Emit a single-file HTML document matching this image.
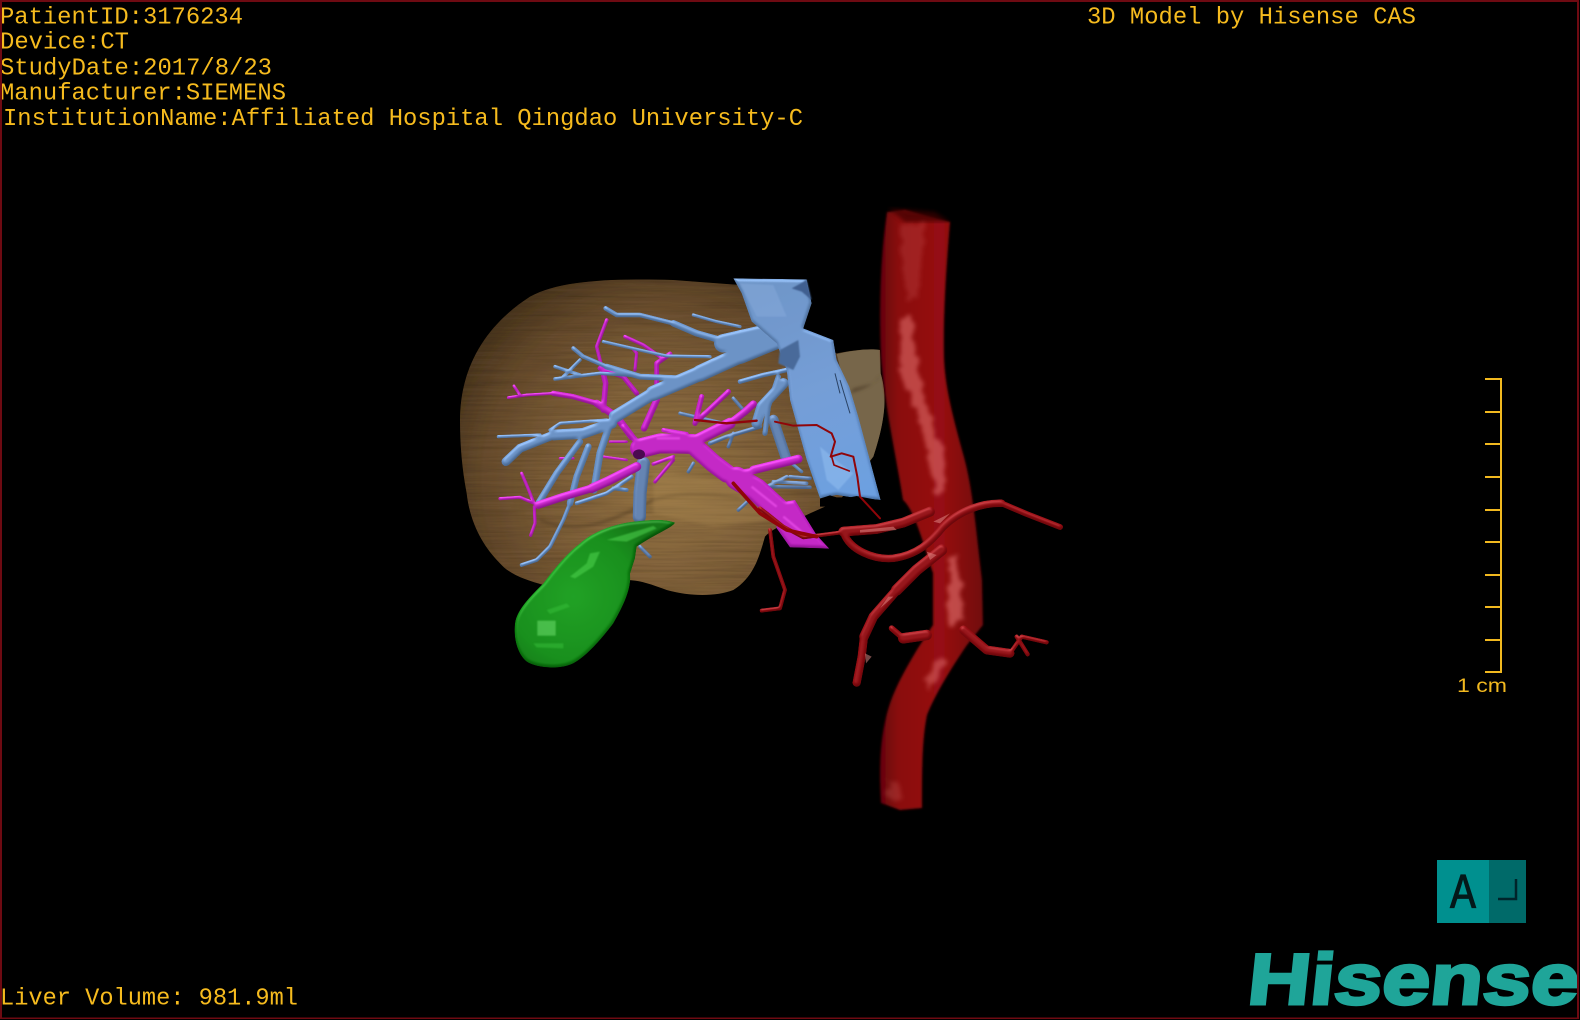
<!DOCTYPE html>
<html lang="en"><head><meta charset="utf-8"><title>3D Model</title>
<style>html,body{margin:0;padding:0;background:#000;width:1580px;height:1020px;overflow:hidden}svg{display:block}
.t{font-family:"Liberation Mono",monospace;font-size:24px;fill:#f6bb1e}
.v{fill:none;stroke-linecap:round;stroke-linejoin:round}</style></head><body>
<svg width="1580" height="1020" viewBox="0 0 1580 1020" xmlns="http://www.w3.org/2000/svg">
<defs>
<radialGradient id="lg" gradientUnits="userSpaceOnUse" cx="680" cy="660" r="690"><stop offset="0" stop-color="#967545"/><stop offset=".45" stop-color="#80613a"/><stop offset=".8" stop-color="#664b2d"/><stop offset="1" stop-color="#4a3620"/></radialGradient>
<linearGradient id="ivc" gradientUnits="userSpaceOnUse" x1="1000" y1="60" x2="1260" y2="720"><stop offset="0" stop-color="#6f9bd4"/><stop offset=".5" stop-color="#76a4e4"/><stop offset="1" stop-color="#6ca6f0"/></linearGradient>
<linearGradient id="ao" x1="0" y1="0" x2="1" y2="0"><stop offset="0" stop-color="#640509"/><stop offset=".18" stop-color="#8a0a10"/><stop offset=".6" stop-color="#960c12"/><stop offset="1" stop-color="#72070b"/></linearGradient>
<radialGradient id="gb" gradientUnits="userSpaceOnUse" cx="220" cy="290" r="270"><stop offset="0" stop-color="#16a81b"/><stop offset=".7" stop-color="#0e9412"/><stop offset="1" stop-color="#0a7a0d"/></radialGradient>
<filter id="tex" x="0" y="0" width="100%" height="100%"><feTurbulence type="fractalNoise" baseFrequency="0.004 0.14" numOctaves="3" seed="4"/><feColorMatrix values="0 0 0 0 0 0 0 0 0 0 0 0 0 0 0 .5 0 0 0 -.18" result="n"/><feComposite in="n" in2="SourceAlpha" operator="in" result="n2"/><feMerge><feMergeNode in="SourceGraphic"/><feMergeNode in="n2"/></feMerge></filter>
<filter id="tube" x="-5%" y="-5%" width="110%" height="110%" color-interpolation-filters="sRGB">
<feGaussianBlur in="SourceAlpha" stdDeviation="5" result="b"/>
<feDiffuseLighting in="b" surfaceScale="3" diffuseConstant="1" lighting-color="#fff" result="d"><feDistantLight azimuth="250" elevation="55"/></feDiffuseLighting>
<feComposite in="SourceGraphic" in2="d" operator="arithmetic" k1=".65" k2=".35" k3="0" k4="0" result="m"/>
<feSpecularLighting in="b" surfaceScale="3" specularConstant=".2" specularExponent="40" lighting-color="#fff" result="s"><feDistantLight azimuth="250" elevation="60"/></feSpecularLighting>
<feComposite in="m" in2="s" operator="arithmetic" k1="0" k2="1" k3="1" k4="0" result="r"/>
<feComposite in="r" in2="SourceAlpha" operator="in"/>
</filter>
<filter id="b2"><feGaussianBlur stdDeviation="2"/></filter>
<filter id="b5"><feGaussianBlur stdDeviation="5"/></filter>
<filter id="b1"><feGaussianBlur stdDeviation="1"/></filter>
<filter id="rough" x="-30%" y="-30%" width="160%" height="160%"><feTurbulence type="fractalNoise" baseFrequency="0.09" numOctaves="2" seed="7" result="t"/><feDisplacementMap in="SourceGraphic" in2="t" scale="12" xChannelSelector="R" yChannelSelector="G"/><feGaussianBlur stdDeviation="2"/></filter>
</defs>
<rect width="1580" height="1020" fill="#000"/>

<!-- zoom-2 coordinate space -->
<g transform="translate(440 260) scale(.33333)">
<path filter="url(#tex)" fill="url(#lg)" d="M60,480 C60,330 130,200 270,110 C360,60 520,55 700,60 L900,75 L1000,200 L1190,280 C1240,270 1290,265 1320,270 L1322,340 C1340,400 1340,470 1300,590 L1200,720 L1110,760 C1060,785 1000,800 975,830 C960,880 945,950 880,990 C830,1010 750,1010 680,990 C640,975 600,960 560,960 L310,975 C260,960 210,945 180,910 C130,860 90,790 80,700 C65,620 60,550 60,480Z"/>
<path fill="#77664a" d="M1190,282 C1240,270 1290,265 1320,270 L1322,340 C1340,400 1340,470 1300,590 L1260,640 L1220,400Z"/>
<path fill="#5a4a33" filter="url(#b5)" d="M1230,400 C1270,390 1310,370 1322,345 L1300,370 L1240,385Z"/>
<path fill="none" stroke="#4f3a22" stroke-width="8" opacity=".6" filter="url(#b5)" d="M300,780 C420,830 520,780 640,720 C720,695 820,700 900,715"/>
<path fill="#a98650" opacity=".4" filter="url(#b5)" d="M640,640 L860,660 L1000,780 L820,800 L640,760Z"/>

<!-- rear portal / deep branches -->
<g filter="url(#tube)"><g class="v" stroke="#6488bc">
<path stroke-width="40" d="M610,610 L600,700 L598,770"/>
<path stroke-width="32" d="M1000,480 L1040,600"/>
<path stroke-width="11" d="M1050,650 L1110,655 M990,680 L1110,682 M1000,665 L1100,670"/>
<path stroke-width="11" d="M1040,650 L960,690 L895,750"/>
<path stroke-width="13" d="M960,500 L860,530 L810,550"/>
<path stroke-width="11" d="M720,460 L850,490 M880,415 L910,450 M880,520 L865,560 M760,610 L745,635"/>
<path stroke-width="11" d="M600,860 L630,890"/>
</g></g>

<!-- magenta upper branches -->
<g filter="url(#tube)"><g class="v" stroke="#cf20d2">
<path stroke-width="22" d="M575,530 L530,470 L470,430"/>
<path stroke-width="16" d="M470,430 L400,410 L340,400"/>
<path stroke-width="9" d="M340,400 L260,405 L205,413 M240,405 L222,378"/>
<path stroke-width="17" d="M490,450 L497,370 L485,320"/>
<path stroke-width="11" d="M485,320 L470,260 L500,180"/>
<path stroke-width="15" d="M590,400 L550,350 L480,325"/>
<path stroke-width="15" d="M650,380 L650,310 L690,282"/>
<path stroke-width="11" d="M660,290 L610,255 L555,230"/>
<path stroke-width="10" d="M585,330 L590,280 L578,265"/>
<path stroke-width="20" d="M612,505 L650,420"/>
<path stroke-width="8" d="M490,590 L560,600 M360,595 L400,595 M510,545 L560,545"/>
</g></g>

<!-- hepatic veins -->
<g filter="url(#tube)"><g class="v" stroke="#6c98d2">
<path stroke-width="54" d="M1010,240 L900,285"/>
<path stroke-width="50" d="M900,285 L780,340"/>
<path stroke-width="46" d="M780,340 L640,400"/>
<path stroke-width="38" d="M640,400 L525,470"/>
<path stroke-width="40" d="M1060,170 L1040,240 L1045,300"/>
<path stroke-width="56" d="M960,225 L850,250"/>
<path stroke-width="33" d="M515,490 L430,520 L340,525"/>
<path stroke-width="27" d="M340,525 L240,565 L198,605"/>
<path stroke-width="20" d="M840,240 L770,220 L700,190"/>
<path stroke-width="14" d="M700,190 L600,165 L530,165 L497,145"/>
<path stroke-width="10" d="M760,165 L830,185 L900,200"/>
<path stroke-width="10" d="M490,245 L620,275 L680,288 L810,290"/>
<path stroke-width="18" d="M720,355 L600,350 L500,320"/>
<path stroke-width="13" d="M500,320 L430,290 L400,265"/>
<path stroke-width="11" d="M640,350 L480,340 L345,357 M345,320 L420,345 M420,300 L370,350"/>
<path stroke-width="10" d="M500,480 L360,490 L330,510 M300,525 L175,530"/>
<path stroke-width="22" d="M510,490 L480,580 L462,690"/>
<path stroke-width="20" d="M420,545 L350,640 L295,730"/>
<path stroke-width="20" d="M445,560 L410,650 L390,730"/>
<path stroke-width="12" d="M390,730 L370,780 L330,860 L290,900 L245,915"/>
<path stroke-width="12" d="M575,650 L500,700 L410,730 M520,685 L560,690"/>
<path stroke-width="14" d="M1050,328 L970,345 L900,365"/>
<path stroke-width="16" d="M1015,350 L985,440 L975,520"/>
<path stroke-width="32" d="M1030,370 L965,440 L950,490"/>
<path stroke-width="10" d="M1055,610 L1085,635"/>
</g></g>

<!-- magenta main -->
<g filter="url(#tube)"><g class="v" stroke="#cf20d2">
<path stroke-width="28" d="M590,620 L500,665 L455,685"/>
<path stroke-width="24" d="M455,685 L370,710 L295,735"/>
<path stroke-width="10" d="M295,735 L240,712 L180,716 M283,740 L285,790 L272,826 M280,725 L262,680 L245,640"/>
<path stroke-width="11" d="M700,590 L640,612 M700,600 L645,665"/>
<path stroke-width="18" d="M550,500 L590,545"/>
<path stroke-width="13" d="M670,510 L740,522"/>
<path stroke-width="16" d="M765,490 L785,410 M775,480 L865,395"/>
<path stroke-width="34" d="M770,540 L870,490"/>
<path stroke-width="22" d="M870,490 L915,455 L940,432"/>
<path stroke-width="14" d="M870,640 L940,630"/>
<path stroke-width="26" d="M940,630 L1075,597"/>
<path stroke-width="60" d="M600,565 L660,550 L760,552"/>
<path stroke-width="56" d="M770,565 L820,610 L860,640"/>
<path stroke-width="70" d="M890,655 L950,690 L1020,755"/>
<path fill="#cf20d2" stroke="none" d="M1000,730 L1065,720 L1130,825 L1168,866 L1050,862 L1010,805Z"/>
</g></g>
<ellipse cx="597" cy="583" rx="18" ry="15" fill="#4a0a50"/>
<path stroke="#f456f4" stroke-width="7" fill="none" opacity=".6" filter="url(#b2)" d="M935,680 L1010,740 M1030,770 L1090,820 M650,535 L720,535"/>

<!-- IVC -->
<path filter="url(#tube)" fill="url(#ivc)" d="M880,55 L1100,58 L1115,130 L1090,205 L1180,240 L1190,300 L1228,380 L1255,470 L1322,720 L1235,712 L1190,705 L1140,715 L1100,600 L1050,420 L1040,330 L1010,250 L935,185 L905,100Z"/>
<path fill="#3f5f90" filter="url(#b2)" d="M1055,85 L1100,60 L1115,120 L1085,95Z"/>
<path fill="#4a6a9a" filter="url(#b2)" d="M1020,270 L1075,240 L1080,290 L1060,330 L1015,310Z"/>
<path fill="#8fbcef" opacity=".6" filter="url(#b2)" d="M1140,560 L1200,610 L1240,640 L1195,690 L1160,660Z"/>
<path fill="#8dafdf" opacity=".4" filter="url(#b2)" d="M900,70 L1000,75 L1040,170 L950,170Z"/>
<path stroke="#2a4264" stroke-width="3" fill="none" d="M1185,340 L1200,400 M1200,360 L1230,460"/>
<path fill="#000" d="M1140,716 L1170,706 L1190,712 L1230,712 L1250,708 L1322,722 L1322,740 L1140,740Z"/>
</g>

<!-- gallbladder (zoom-7 space) -->
<g transform="translate(500 500) scale(.33333)">
<path filter="url(#tube)" fill="url(#gb)" d="M525,68 C520,82 470,100 410,140 L405,175 L390,222 C395,260 375,310 340,370 C310,410 260,470 220,490 C180,510 110,505 80,485 C50,460 40,410 45,370 C50,330 90,290 130,250 C160,210 200,160 240,130 C280,95 340,72 400,65 C450,60 490,55 525,68Z"/>
<path fill="#4fd44f" opacity=".55" filter="url(#b2)" d="M320,120 L370,105 L460,78 L470,85 L380,125Z M210,230 L260,190 L270,160 L300,155 L280,200 L225,235Z"/>
<rect x="112" y="362" width="55" height="45" fill="#66d866" opacity=".6" filter="url(#b2)"/>
<path fill="#38c03a" opacity=".5" filter="url(#b2)" d="M100,430 L190,430 L190,445 L110,442Z M140,330 L200,310 L210,320 L150,342Z"/>
</g>

<!-- aorta -->
<path filter="url(#b1)" fill="url(#ao)" d="M887,212 L905,210 L950,222 C947,260 943,310 944,357 C945,385 951,410 964,457 C973,490 976,530 982,580 L983,625 L967,645 C950,670 935,695 927,715 C922,740 922,770 922,808 L900,810 L881,803 C879,770 880,745 885,722 C890,695 905,670 918,648 L933,625 L933,573 C925,550 915,510 903,500 C897,460 885,410 881,357 C879,310 880,260 887,212Z"/>
<path fill="#3d0306" opacity=".7" filter="url(#b2)" d="M888,208 L935,212 L950,222 L905,222Z"/>
<g fill="#dd6a68" filter="url(#rough)">
<path opacity=".6" d="M900,320 L912,318 L918,370 L925,400 L945,460 L945,490 L935,495 L928,450 L912,400 L900,370Z"/>
<path opacity=".22" d="M900,225 L925,222 L918,300 L905,300Z"/>
<path opacity=".65" d="M948,558 L958,555 L963,620 L950,625Z"/>
<path opacity=".55" d="M925,680 L940,655 L945,665 L932,688Z"/>
<path opacity=".25" d="M888,780 L900,780 L902,800 L890,800Z"/>
</g>

<!-- red branches (zoom-3 space) -->
<g transform="translate(760 480) scale(.33333)">
<g filter="url(#tube)"><g class="v" stroke="#9c0b11">
<path stroke-width="30" d="M250,155 L350,147 L430,128 L510,95"/>
<path stroke-width="12" d="M240,158 L130,172 L70,140 L20,100 L0,85"/>
<path stroke-width="23" d="M252,160 C270,210 340,240 400,235 C470,225 510,190 550,140 C600,90 670,68 725,70"/>
<path stroke-width="18" d="M725,70 L800,102 L900,141"/>
<path stroke-width="34" d="M545,210 L470,270 L410,330"/>
<path stroke-width="29" d="M410,330 L340,410 L312,470"/>
<path stroke-width="25" d="M312,470 L305,530 L290,608"/>
<path stroke-width="12" d="M30,150 L40,230 L75,330 L60,385 L5,392"/>
<path stroke-width="27" d="M610,450 L680,510 L750,520"/>
<path stroke-width="13" d="M750,520 L785,470 L860,487 M770,470 L803,523"/>
<path stroke-width="32" d="M500,465 L430,475"/>
<path stroke-width="18" d="M430,475 L395,445"/>
</g></g>
<g fill="#e5908c" filter="url(#b1)" opacity=".5"><path d="M520,125 L570,100 L540,130Z M500,215 L530,225 L510,240Z M385,350 L400,350 L360,385Z M315,520 L335,530 L318,550Z M300,150 L400,140 L410,150 L300,158Z"/></g>
</g>

<!-- thin artery wires (zoom-2 space) -->
<g transform="translate(440 260) scale(.33333)">
<g class="v" stroke="#900509">
<path stroke-width="7" d="M765,480 L860,490 L950,482"/>
<path stroke-width="6" d="M1005,485 L1060,497 L1130,495 L1175,520 L1185,545 L1172,590 L1205,580 L1240,590 L1252,650 L1260,710 L1320,775"/>
<path stroke-width="5" d="M1175,590 L1182,615 L1228,633"/>
<path stroke-width="11" d="M880,670 L960,760 L1040,810 L1130,830"/>
</g></g>

<!-- text -->
<text class="t" x="0" y="23.5" textLength="243" lengthAdjust="spacingAndGlyphs">PatientID:3176234</text>
<text class="t" x="0" y="48.5" textLength="129" lengthAdjust="spacingAndGlyphs">Device:CT</text>
<text class="t" x="0" y="74.5" textLength="272" lengthAdjust="spacingAndGlyphs">StudyDate:2017/8/23</text>
<text class="t" x="0" y="99.5" textLength="286" lengthAdjust="spacingAndGlyphs">Manufacturer:SIEMENS</text>
<text class="t" x="3" y="125" textLength="800" lengthAdjust="spacingAndGlyphs">InstitutionName:Affiliated Hospital Qingdao University-C</text>
<text class="t" x="1087" y="23.5" textLength="329" lengthAdjust="spacingAndGlyphs">3D Model by Hisense CAS</text>
<text class="t" x="0" y="1004.5" textLength="298" lengthAdjust="spacingAndGlyphs">Liver Volume: 981.9ml</text>

<!-- scale bar -->
<path fill="none" stroke="#f2b91f" stroke-width="2" d="M1485,379H1501V672H1485M1485,412H1501M1485,444H1501M1485,477H1501M1485,510H1501M1485,542H1501M1485,575H1501M1485,607H1501M1485,640H1501"/>
<text x="1457" y="692" textLength="50" lengthAdjust="spacingAndGlyphs" style="font-family:'Liberation Sans',sans-serif;font-size:19px" fill="#f2b91f">1 cm</text>

<!-- orientation cube -->
<rect x="1437" y="860" width="52" height="63" fill="#00908f"/>
<rect x="1489" y="860" width="37" height="63" fill="#006a69"/>
<text x="1450" y="908" textLength="26" lengthAdjust="spacingAndGlyphs" style="font-family:'Liberation Mono',monospace;font-size:50px" fill="#04181a" stroke="#04181a" stroke-width=".8">A</text>
<path fill="none" stroke="#00242a" stroke-width="2.5" d="M1498,899H1516V879"/>

<!-- logo -->
<text transform="translate(1246 1004) skewX(-6)" x="0" y="0" textLength="331" lengthAdjust="spacingAndGlyphs" style="font-family:'Liberation Sans',sans-serif;font-weight:700;font-size:72px" fill="#1fa599" stroke="#1fa599" stroke-width="3">Hisense</text>

<!-- border -->
<rect x="1" y="1" width="1577" height="1017.5" fill="none" stroke="#6e0a12" stroke-width="2"/>
<rect x="1579" y="0" width="1" height="1020" fill="#000"/>
<rect x="0" y="1019" width="1580" height="1" fill="#000"/>
</svg></body></html>
